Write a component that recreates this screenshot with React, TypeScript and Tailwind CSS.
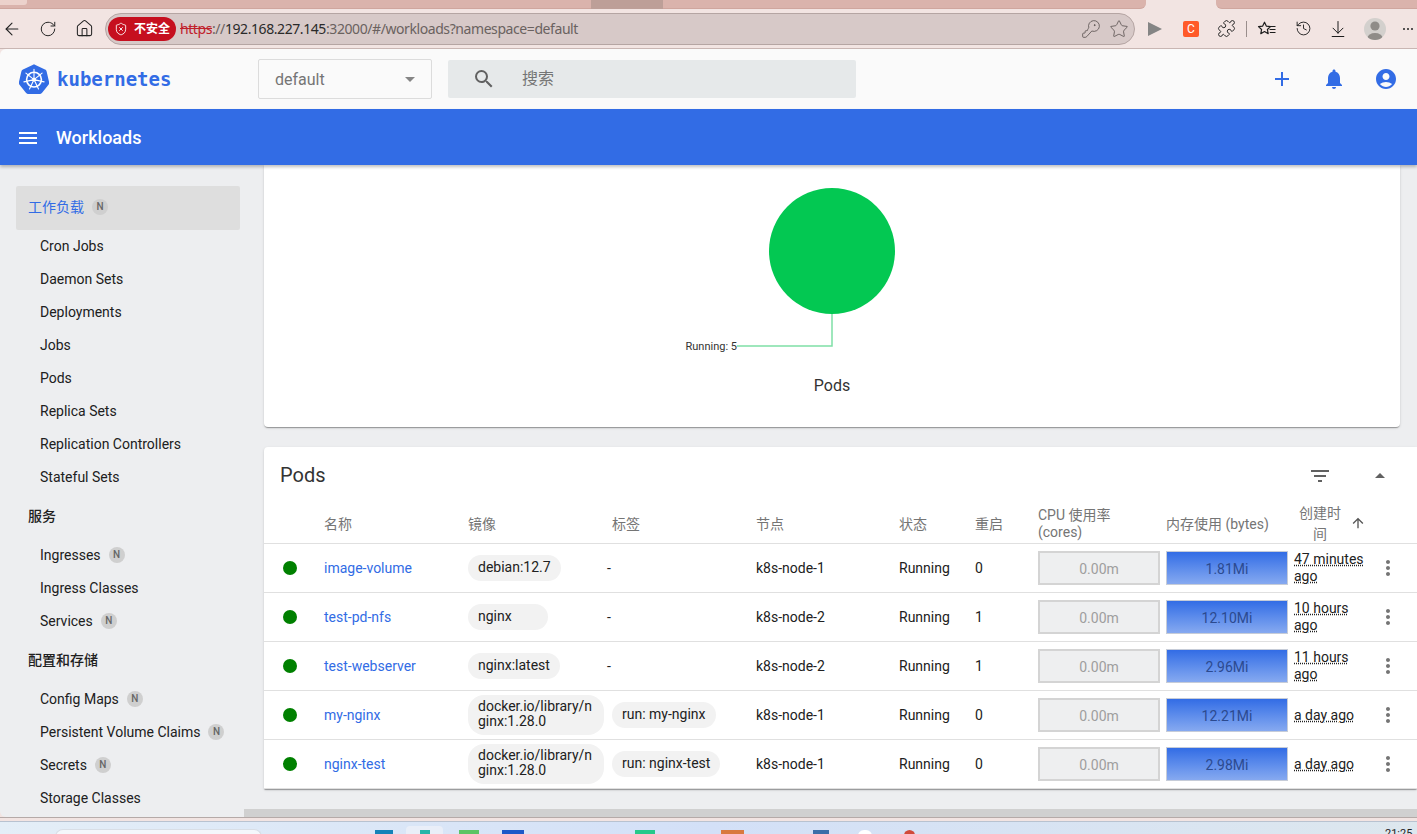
import React from "react";
import { ArrowLeft, RotateCw, House, KeyRound, Star, Puzzle, History, ArrowDownToLine, ShieldX } from "lucide-react";
import {
  MdAdd,
  MdNotifications,
  MdAccountCircle,
  MdSearch,
  MdMenu,
  MdFilterList,
  MdMoreVert,
  MdArrowUpward,
  MdArrowDropUp,
  MdArrowDropDown,
} from "react-icons/md";

const Badge = () => (
  <span className="ml-2 flex h-4 w-4 items-center justify-center rounded-full bg-[#cfcfcf] text-[10px] font-medium leading-none text-[#666]">
    N
  </span>
);

const Item = ({ label, badge }: { label: string; badge?: boolean }) => (
  <div className="flex h-[33px] items-center pb-[2px] pl-10 text-sm text-[#202020]">
    <span>{label}</span>
    {badge && <Badge />}
  </div>
);

const Section = ({ label }: { label: string }) => (
  <div className="flex h-[45px] items-center pb-[2px] pl-7 text-sm font-medium text-[#202020]">{label}</div>
);

const Logo = () => (
  <svg width="30" height="30" viewBox="0 0 30 30" className="shrink-0">
    <path
      d="M15 .6c.5 0 1 .1 1.4.3l9.6 4.7c.9.4 1.5 1.2 1.7 2.1l2.4 10.4c.2.9 0 1.9-.6 2.6l-6.6 8.3c-.6.7-1.5 1.1-2.4 1.1H9.5c-.9 0-1.8-.4-2.4-1.1L.5 20.7c-.6-.7-.8-1.7-.6-2.6L2.3 7.7c.2-.9.8-1.7 1.7-2.1L13.6.9c.4-.2.9-.3 1.4-.3z"
      fill="#326ce5"
    />
    <g stroke="#fff" fill="none" strokeLinecap="round">
      <circle cx="15" cy="15.6" r="7.4" strokeWidth="1.6" />
      <circle cx="15" cy="15.6" r="1.6" fill="#fff" strokeWidth="0.6" />
      <path
        strokeWidth="1.1"
        d="M15 15.6V5.2M15 15.6l8.1-6.5M15 15.6l10.1 2.3M15 15.6l4.5 9.4M15 15.6l-4.5 9.4M15 15.6L4.9 17.9M15 15.6L6.9 9.1"
      />
    </g>
  </svg>
);

const StarList = () => (
  <svg width="20" height="20" viewBox="0 0 20 20" fill="none" stroke="#1d1d1d" strokeWidth="1.2" strokeLinejoin="round">
    <path d="M7.5 3.2l1.8 3.9 4.2.5-3.1 2.9.8 4.2-3.7-2.1-3.7 2.1.8-4.2L1.5 7.6l4.2-.5z" />
    <path d="M13 7.5h5.5M12.6 10.5h5.9M12.8 13.5h5.7" />
  </svg>
);

type Pod = {
  name: string;
  image: string;
  label: string;
  node: string;
  restarts: string;
  mem: string;
  created: string;
};

const pods: Pod[] = [
  { name: "image-volume", image: "debian:12.7", label: "-", node: "k8s-node-1", restarts: "0", mem: "1.81Mi", created: "47 minutes ago" },
  { name: "test-pd-nfs", image: "nginx", label: "-", node: "k8s-node-2", restarts: "1", mem: "12.10Mi", created: "10 hours ago" },
  { name: "test-webserver", image: "nginx:latest", label: "-", node: "k8s-node-2", restarts: "1", mem: "2.96Mi", created: "11 hours ago" },
  { name: "my-nginx", image: "docker.io/library/nginx:1.28.0", label: "run: my-nginx", node: "k8s-node-1", restarts: "0", mem: "12.21Mi", created: "a day ago" },
  { name: "nginx-test", image: "docker.io/library/nginx:1.28.0", label: "run: nginx-test", node: "k8s-node-1", restarts: "0", mem: "2.98Mi", created: "a day ago" },
];

const Chip = ({ text }: { text: string }) => (
  <span className="flex min-h-[26px] min-w-[80px] max-w-[136px] items-center rounded-[16px] bg-[#f2f2f2] px-[10px] pb-[6px] pt-[4px] text-sm leading-[15px] break-all text-[#212121] w-fit">
    {text}
  </span>
);

const cols = "grid grid-cols-[60px_144px_144px_144px_143px_76px_63px_128px_128px_78px_45px] items-center";

export default function App() {
  return (
    <div className="flex h-[834px] w-[1417px] flex-col overflow-hidden bg-[#f2e4e2] font-[Roboto,'Noto_Sans_CJK_SC',sans-serif]">
      {/* tab strip */}
      <div className="flex h-[9px] shrink-0">
        <div className="h-full w-[591px] border-b border-[#cfa69e] bg-[#dab3ac]">
          <div className="h-[5px] w-[27px] rounded-br-[3px] bg-[#ecd2cc]" />
        </div>
        <div className="h-full w-[72px] bg-[#bd9f98]" />
        <div className="h-full w-[483px] rounded-br-[6px] border-b border-[#cfa69e] bg-[#dab3ac]" />
        <div className="h-full w-[70px]" />
        <div className="h-full flex-1 rounded-bl-[6px] border-b border-[#cfa69e] bg-[#dab3ac]" />
      </div>

      {/* browser toolbar */}
      <div className="flex h-[40px] shrink-0 items-center border-b border-[#c9b6b3] pl-[2px]">
        <ArrowLeft size={20} strokeWidth={1.3} className="text-[#222]" />
        <RotateCw size={18} strokeWidth={1.3} className="ml-[17px] text-[#222]" />
        <House size={19} strokeWidth={1.3} className="ml-[18px] text-[#222]" />
        <div className="ml-[11px] flex h-[32px] w-[1030px] items-center rounded-full border border-[#b5a5a3] bg-[#d7c9c8] pl-[2px] pr-[5px]">
          <div className="flex h-[24px] w-[68px] items-center rounded-full bg-[#c60f1f] pl-[6px] text-white">
            <ShieldX size={14} strokeWidth={1.5} />
            <span className="ml-[6px] text-xs font-bold">不安全</span>
          </div>
          <div className="ml-[4px] text-[14px] text-[#6a6260] font-['Noto_Sans',sans-serif] tracking-[-0.42px]">
            <span className="text-[#c0202a] line-through">https</span>
            <span>://</span>
            <span className="text-[#2a2a2a]">192.168.227.145</span>
            <span>:32000/#/workloads?namespace=default</span>
          </div>
          <div className="ml-auto flex items-center gap-2 text-[#5a5250]">
            <KeyRound size={20} strokeWidth={1} className="-scale-x-100 rotate-90" />
            <Star size={20} strokeWidth={1} />
          </div>
        </div>
        <svg width="20" height="20" viewBox="0 0 20 20" className="ml-[10px]">
          <path d="M3 3l14 7-14 7z" fill="#858585" />
        </svg>
        <div className="ml-[18px] flex h-[16px] w-[16px] items-center justify-center rounded-[2px] bg-[#ff5a29] text-xs leading-none text-white">
          C
        </div>
        <Puzzle size={19} strokeWidth={1.2} className="ml-[18px] text-[#1d1d1d]" />
        <div className="ml-[10px] h-[16px] w-px bg-[#9a8e8c]" />
        <div className="ml-[10px]">
          <StarList />
        </div>
        <History size={17} strokeWidth={1.3} className="ml-[18px] text-[#1d1d1d]" />
        <ArrowDownToLine size={20} strokeWidth={1.2} className="ml-[16px] text-[#1d1d1d]" />
        <div className="relative ml-[16px] h-[22px] w-[22px] overflow-hidden rounded-full bg-[#d3d0cd]">
          <svg width="22" height="22" viewBox="0 0 22 22">
            <circle cx="11" cy="8" r="4.6" fill="#8f8c88" />
            <ellipse cx="11" cy="20" rx="7.5" ry="5" fill="#8f8c88" />
          </svg>
        </div>
        <div className="ml-[17px] flex gap-[2px]">
          <span className="h-[2px] w-[2px] rounded-full bg-[#222]" />
          <span className="h-[2px] w-[2px] rounded-full bg-[#222]" />
          <span className="h-[2px] w-[2px] rounded-full bg-[#222]" />
        </div>
      </div>

      {/* kubernetes header */}
      <div className="flex h-[60px] shrink-0 items-center rounded-tl-[6px] bg-[#fafafa] pl-[19px] pr-[19px]">
        <div className="flex w-[239px] shrink-0 items-center">
          <Logo />
          <span className="ml-2 font-['DejaVu_Sans_Mono',monospace] text-[19px] font-bold leading-none text-[#326ce5]">kubernetes</span>
        </div>
        <div className="flex h-[40px] w-[174px] items-center justify-between rounded-[2px] border border-[#dcdcdc] pl-4 pr-[9px] text-base text-[#757575]">
          <span className="pt-[2px]">default</span>
          <MdArrowDropDown size={24} className="text-[#858585]" />
        </div>
        <div className="ml-4 flex h-[38px] w-[408px] items-center rounded-[2px] bg-[#e6e9ea] pl-6 text-base text-[#757575]">
          <MdSearch size={24} className="text-[#616161]" />
          <span className="ml-[26px]">搜索</span>
        </div>
        <div className="ml-auto flex items-center gap-7 text-[#326ce5]">
          <MdAdd size={24} />
          <MdNotifications size={24} />
          <MdAccountCircle size={24} />
        </div>
      </div>

      {/* blue bar */}
      <div className="z-10 flex h-[56px] shrink-0 items-center bg-[#326ce5] pl-4 pt-[2px] text-white shadow-[0_2px_3px_rgba(0,0,0,0.25)]">
        <MdMenu size={24} />
        <span className="ml-4 text-lg font-medium">Workloads</span>
      </div>

      {/* main */}
      <div className="flex h-[652px] shrink-0 overflow-hidden rounded-bl-[6px] bg-[#edeef0]">
        <aside className="w-[244px] shrink-0 overflow-hidden pt-[21px]">
          <div className="ml-4 flex h-[44px] w-[224px] items-center rounded-[2px] bg-[#dedede] pb-[2px] pl-3 text-sm text-[#326ce5]">
            <span>工作负载</span>
            <Badge />
          </div>
          <Item label="Cron Jobs" />
          <Item label="Daemon Sets" />
          <Item label="Deployments" />
          <Item label="Jobs" />
          <Item label="Pods" />
          <Item label="Replica Sets" />
          <Item label="Replication Controllers" />
          <Item label="Stateful Sets" />
          <Section label="服务" />
          <Item label="Ingresses" badge />
          <Item label="Ingress Classes" />
          <Item label="Services" badge />
          <Section label="配置和存储" />
          <Item label="Config Maps" badge />
          <Item label="Persistent Volume Claims" badge />
          <Item label="Secrets" badge />
          <Item label="Storage Classes" />
        </aside>

        <div className="flex min-w-0 flex-1 flex-col">
          <div className="flex-1 overflow-hidden pl-5">
            {/* chart card */}
            <div className="flex h-[262px] w-[1136px] flex-col items-center rounded-b-[4px] bg-white shadow-[0_2px_1px_-1px_rgba(0,0,0,0.2),0_1px_1px_rgba(0,0,0,0.14),0_1px_3px_rgba(0,0,0,0.12)]">
              <svg width="300" height="206" viewBox="0 0 300 206" className="shrink-0">
                <circle cx="150" cy="86" r="63" fill="#03c852" />
                <path d="M150 149v32H55" fill="none" stroke="#7fe0a7" strokeWidth="1.5" />
                <text x="55" y="185" textAnchor="end" fontSize="11" fill="#333" fontFamily="Roboto">
                  Running: 5
                </text>
              </svg>
              <div className="mt-[3px] text-base leading-[24px] text-[#333]">Pods</div>
            </div>

            {/* table card */}
            <div className="mt-5 h-[342px] rounded-tl-[4px] bg-white shadow-[0_2px_1px_-1px_rgba(0,0,0,0.2),0_1px_1px_rgba(0,0,0,0.14),0_1px_3px_rgba(0,0,0,0.12)]">
              <div className="flex h-[58px] items-center pl-4 pr-[25px]">
                <span className="pb-[2px] text-xl text-[#333]">Pods</span>
                <div className="ml-auto flex items-center gap-9 text-[#616161]">
                  <MdFilterList size={24} />
                  <MdArrowDropUp size={24} />
                </div>
              </div>
              <div className={`${cols} h-[39px] content-center border-b border-[#e0e0e0] text-sm leading-[17px] text-[#757575]`}>
                <div />
                <div>名称</div>
                <div>镜像</div>
                <div>标签</div>
                <div>节点</div>
                <div>状态</div>
                <div>重启</div>
                <div>
                  CPU 使用率
                  <br />
                  (cores)
                </div>
                <div>内存使用 (bytes)</div>
                <div className="col-span-2 flex items-center pl-[5px]">
                  <div className="w-[42px] text-center leading-[21px]">创建时间</div>
                  <MdArrowUpward size={16} className="mb-[3px] ml-[9px] text-[#555]" />
                </div>
              </div>
              {pods.map((p) => (
                <div key={p.name} className={`${cols} h-[49px] border-b border-[#e0e0e0] text-sm text-[#212121]`}>
                  <div className="pl-[19px]">
                    <div className="h-[14px] w-[14px] rounded-full bg-[#008000]" />
                  </div>
                  <div className="text-[#326ce5]">{p.name}</div>
                  <div>
                    <Chip text={p.image} />
                  </div>
                  <div>{p.label === "-" ? <span className="-ml-[5px]">-</span> : <Chip text={p.label} />}</div>
                  <div>{p.node}</div>
                  <div>Running</div>
                  <div>{p.restarts}</div>
                  <div className="flex h-[34px] w-[122px] items-center justify-center border-2 border-[#d4d4d4] bg-[#eeeff0] pt-[1px] text-[#9e9e9e]">
                    0.00m
                  </div>
                  <div className="flex h-[34px] w-[122px] items-center justify-center border border-[#c6ccd8] bg-linear-to-b from-[#326ce5] to-[#86a9f0] pt-[1px] text-[#2c4a8f]">
                    {p.mem}
                  </div>
                  <div className="leading-[17px]">
                    <span className="underline decoration-dotted">{p.created}</span>
                  </div>
                  <div className="pl-1 text-[#757575]">
                    <MdMoreVert size={24} />
                  </div>
                </div>
              ))}
            </div>
          </div>
          <div className="h-[8px] shrink-0 bg-[#d0d0d0]" />
        </div>
      </div>

      {/* window bottom edge */}
      <div className="h-[4px] shrink-0 border-t border-[#b5aaa8] bg-[#f2e4e2]" />

      {/* taskbar */}
      <div className="flex h-[13px] shrink-0 items-start overflow-hidden border-t border-[#b8c2d0] bg-linear-to-r from-[#e4eef7] via-[#d3e0f7] to-[#dde7ee]">
        <div className="ml-[55px] mt-[7px] h-[8px] w-[207px] rounded-t-[10px] border border-[#d8dee6] bg-[#f4f7fb]" />
        <div className="ml-[113px] mt-[8px] h-[6px] w-[18px] bg-[#1582b8]" />
        <div className="ml-[13px] mt-[4px] flex h-[10px] w-[37px] justify-center rounded-t-[4px] bg-[#e9eef8] pt-[4px]">
          <div className="h-[6px] w-[10px] bg-[#25b5a8]" />
        </div>
        <div className="ml-[16px] mt-[8px] h-[6px] w-[20px] bg-[#5cc464]" />
        <div className="ml-[23px] mt-[8px] h-[6px] w-[22px] bg-[#1e58c8]" />
        <div className="ml-[111px] mt-[8px] h-[6px] w-[20px] bg-[#26c98a]" />
        <div className="ml-[66px] mt-[8px] h-[6px] w-[23px] bg-[#d9793f]" />
        <div className="ml-[69px] mt-[8px] h-[6px] w-[16px] bg-[#3a6ea8]" />
        <div className="ml-[29px] mt-[8px] h-[6px] w-[14px] rounded-t-full bg-white" />
        <div className="ml-[32px] mt-[8px] h-[6px] w-[11px] rounded-t-full bg-[#d04a3a]" />
        <div className="ml-[470px] mt-[6px] text-[11px] leading-[12px] text-[#222]">21:25</div>
      </div>
    </div>
  );
}
